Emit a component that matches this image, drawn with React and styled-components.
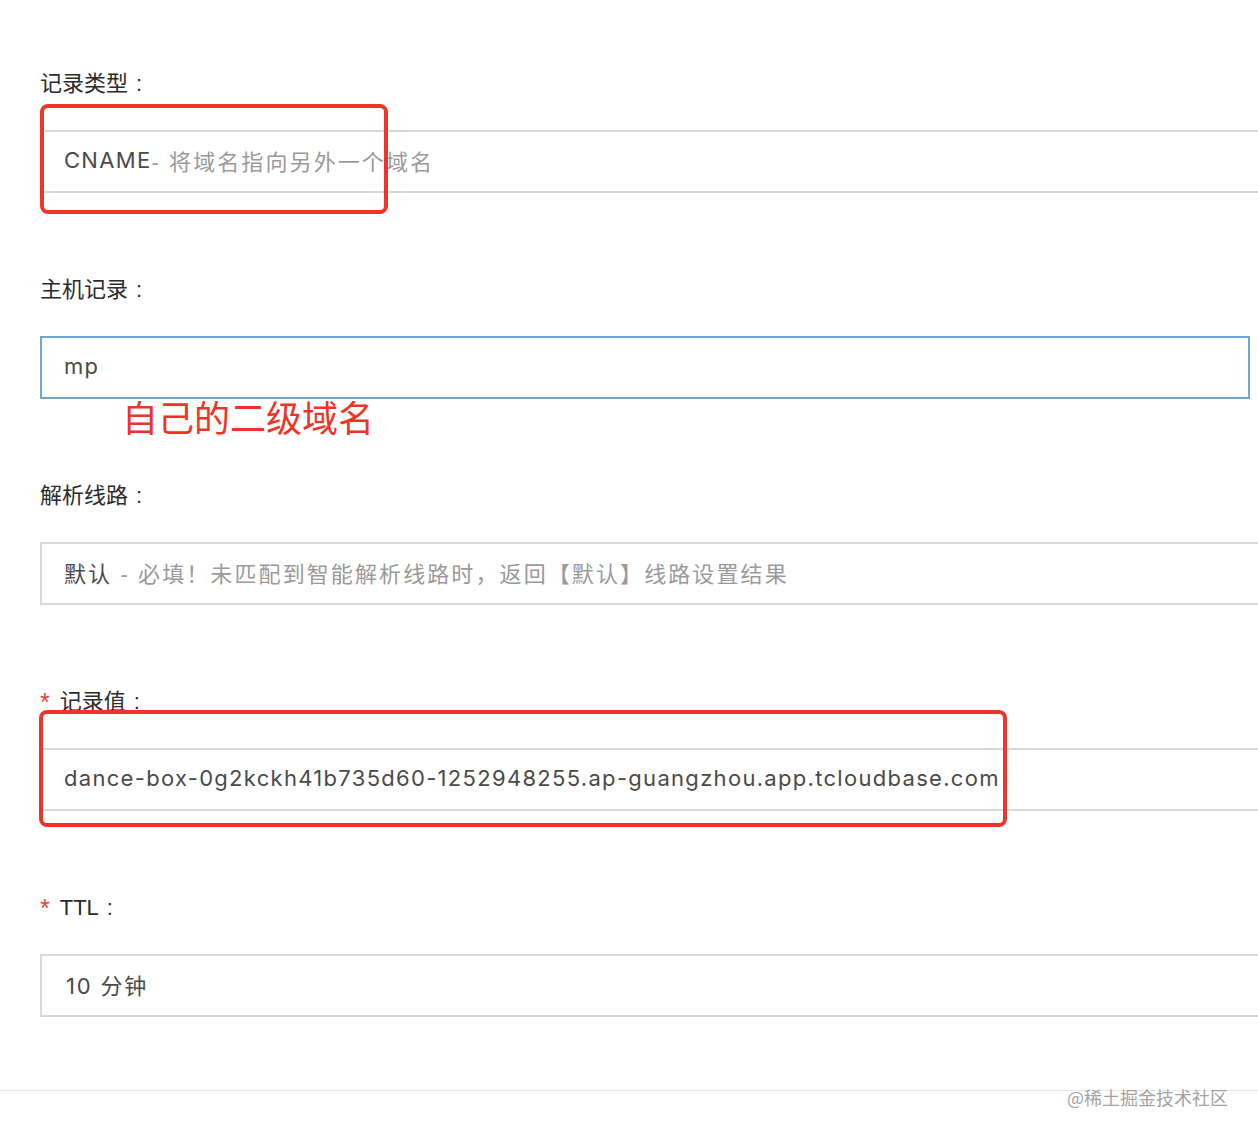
import React from "react";
import styled, { createGlobalStyle } from "styled-components";

const GlobalStyle = createGlobalStyle`
  html, body {
    margin: 0;
    background: #ffffff;
  }
  body {
    font-family: "Liberation Sans", "Noto Sans CJK SC", sans-serif;
    color: #333;
    overflow: hidden;
  }
`;

const Page = styled.div`
  width: 1258px;
  height: 1136px;
  overflow: hidden;
`;

const Form = styled.div`
  padding: 68px 0 0 40px;
`;

const Section = styled.div`
  margin-bottom: ${(p) => (p.$last ? "73px" : "81px")};
`;

const Label = styled.div`
  display: flex;
  align-items: center;
  height: 32px;
  font-size: 22px;
  line-height: 32px;
  color: #2b2b2b;
`;

const Colon = styled.span`
  margin-left: 8px;
  font-family: "Liberation Sans", sans-serif;
`;

const Star = styled.span`
  color: #e0453b;
  font-size: 25px;
  margin-right: 10px;
  font-family: "Liberation Sans", sans-serif;
`;

const Field = styled.div`
  position: relative;
  box-sizing: border-box;
  margin-top: 30px;
  height: 63px;
  width: ${(p) => p.$width || "1260px"};
  border: 2px solid ${(p) => (p.$focused ? "#72a5cf" : "#d9d9d9")};
  display: flex;
  align-items: center;
  padding: 0 0 4px 22px;
  font-size: 22px;
  letter-spacing: 2.1px;
  color: #4a4a4a;
  white-space: nowrap;
`;

const Value = styled.span`
  font-family: "Inter", "Noto Sans CJK SC", sans-serif;
  letter-spacing: ${(p) => (p.$wide ? "1.8px" : "1.3px")};
  margin-left: ${(p) => (p.$wide ? "2px" : "0")};
  color: #4a4a4a;
`;

const Hint = styled.span`
  color: #9a9a9a;
`;

const Highlight = styled.div`
  position: absolute;
  left: ${(p) => p.$left}px;
  top: ${(p) => p.$top}px;
  width: ${(p) => p.$w}px;
  height: ${(p) => p.$h}px;
  box-sizing: border-box;
  border: 4px solid #ef3529;
  border-radius: 8px;
  pointer-events: none;
`;

const Note = styled.div`
  position: absolute;
  left: 80px;
  top: 58px;
  font-family: "Noto Sans CJK SC", sans-serif;
  font-size: 36px;
  line-height: 40px;
  letter-spacing: 0;
  color: #ee3426;
`;

const Footer = styled.div`
  position: relative;
  border-top: 1px solid #e6e6e6;
  height: 46px;
`;

const Watermark = styled.div`
  position: absolute;
  right: 30px;
  top: -6px;
  font-family: "Noto Sans CJK SC", sans-serif;
  font-size: 18px;
  line-height: 24px;
  color: #a3a3a3;
  text-shadow: 0 0 2px #fff;
`;

export default function App() {
  return (
    <Page>
      <GlobalStyle />
      <Form>
        <Section>
          <Label>
            记录类型<Colon>:</Colon>
          </Label>
          <Field>
            <Value>CNAME</Value>
            <Hint>- 将域名指向另外一个域名</Hint>
            <Highlight $left={-2} $top={-28} $w={348} $h={110} />
          </Field>
        </Section>

        <Section>
          <Label>
            主机记录<Colon>:</Colon>
          </Label>
          <Field $focused $width="1210px">
            <Value>mp</Value>
            <Note>自己的二级域名</Note>
          </Field>
        </Section>

        <Section>
          <Label>
            解析线路<Colon>:</Colon>
          </Label>
          <Field>
            <span>默认</span>
            <Hint>&nbsp;- 必填！未匹配到智能解析线路时，返回【默认】线路设置结果</Hint>
          </Field>
        </Section>

        <Section>
          <Label>
            <Star>*</Star>记录值<Colon>:</Colon>
          </Label>
          <Field>
            <Value>dance-box-0g2kckh41b735d60-1252948255.ap-guangzhou.app.tcloudbase.com</Value>
            <Highlight $left={-3} $top={-40} $w={968} $h={117} />
          </Field>
        </Section>

        <Section $last>
          <Label>
            <Star>*</Star>TTL<Colon>:</Colon>
          </Label>
          <Field>
            <Value $wide>10 分钟</Value>
          </Field>
        </Section>
      </Form>
      <Footer>
        <Watermark>@稀土掘金技术社区</Watermark>
      </Footer>
    </Page>
  );
}
